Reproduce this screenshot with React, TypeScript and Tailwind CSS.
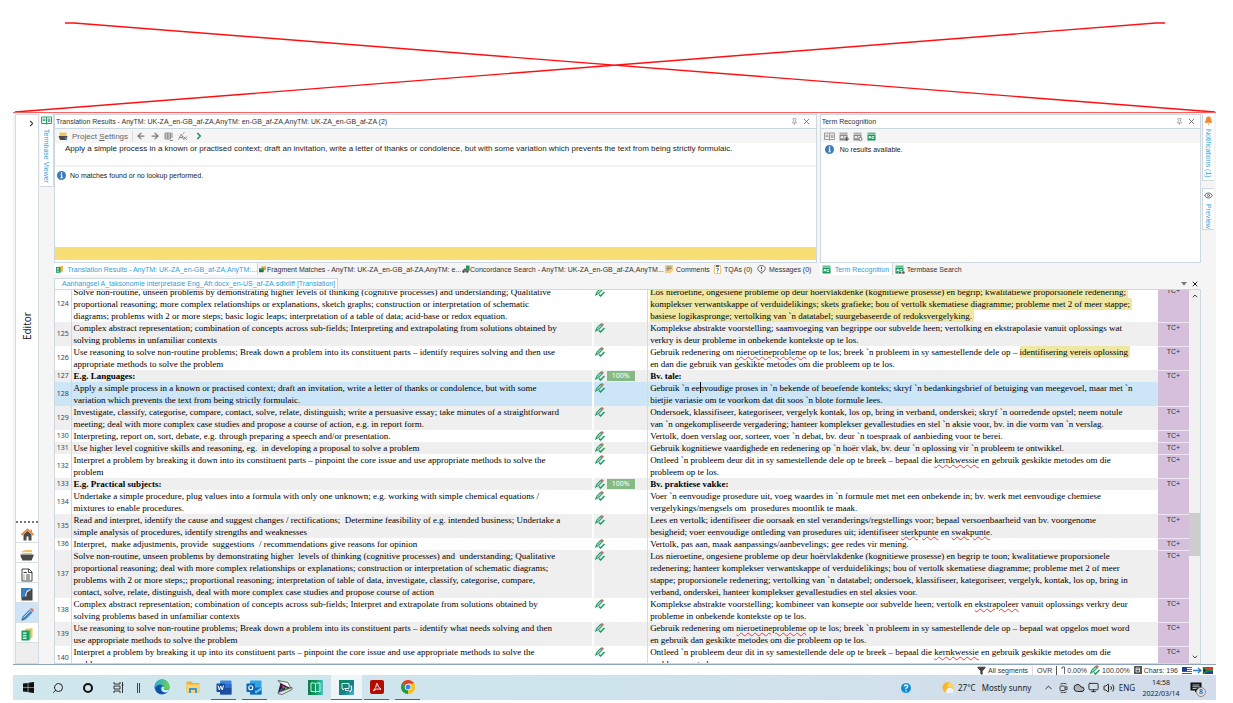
import React from "react";
import {
  Bell, ChevronDown, ChevronUp, ChevronRight, Eye, Filter, Pin, Search, X, Cloud, Volume2, Monitor, ArrowLeft, ArrowRight,
} from "lucide-react";

type Part = string | { t: string; k: "err" | "hl" | "caret" };
type Segment = {
  n: number;
  src: string[];
  tgt: Part[][];
  bold?: boolean;
  match?: string;
  span?: 1 | 2;
  noTag?: boolean;
  selected?: boolean;
};

const err = (t: string): Part => ({ t, k: "err" });
const hl = (t: string): Part => ({ t, k: "hl" });
const caret: Part = { t: "", k: "caret" };

const segments: Segment[] = [
  {
    n: 124,
    src: [
      "Solve non-routine, unseen problems by demonstrating higher levels of thinking (cognitive processes) and understanding; Qualitative",
      "proportional reasoning; more complex relationships or explanations, sketch graphs; construction or interpretation of schematic",
      "diagrams; problems with 2 or more steps; basic logic leaps; interpretation of a table of data; acid-base or redox equation.",
    ],
    tgt: [
      [hl("Los nieroetine, ongesiene probleme op deur hoërvlakdenke (kognitiewe prosesse) en begrip; kwalitatiewe proporsionele redenering;")],
      [hl("komplekser verwantskappe of verduidelikings; skets grafieke; bou of vertolk skematiese diagramme; probleme met 2 of meer stappe;")],
      [hl("basiese logikaspronge; vertolking van `n datatabel; suurgebaseerde of redoksvergelyking.")],
    ],
  },
  {
    n: 125,
    src: [
      "Complex abstract representation; combination of concepts across sub-fields; Interpreting and extrapolating from solutions obtained by",
      "solving problems in unfamiliar contexts",
    ],
    tgt: [
      ["Komplekse abstrakte voorstelling; saamvoeging van begrippe oor subvelde heen; vertolking en ekstrapolasie vanuit oplossings wat"],
      ["verkry is deur probleme in onbekende kontekste op te los."],
    ],
  },
  {
    n: 126,
    src: [
      "Use reasoning to solve non-routine problems; Break down a problem into its constituent parts – identify requires solving and then use",
      "appropriate methods to solve the problem",
    ],
    tgt: [
      ["Gebruik redenering om ", err("nieroetineprobleme"), " op te los; breek `n probleem in sy samestellende dele op – ", hl("identifisering vereis oplossing")],
      ["en dan die gebruik van geskikte metodes om die probleem op te los."],
    ],
  },
  { n: 127, src: ["E.g. Languages:"], tgt: [["Bv. tale:"]], bold: true, match: "100%", span: 2 },
  {
    n: 128,
    src: [
      "Apply a simple process in a known or practised context; draft an invitation, write a letter of thanks or condolence, but with some",
      "variation which prevents the text from being strictly formulaic.",
    ],
    tgt: [
      ["Gebruik `n ee", caret, "nvoudige proses in `n bekende of beoefende konteks; skryf `n bedankingsbrief of betuiging van meegevoel, maar met `n"],
      ["bietjie variasie om te voorkom dat dit soos `n blote formule lees."],
    ],
    noTag: true,
    selected: true,
  },
  {
    n: 129,
    src: [
      "Investigate, classify, categorise, compare, contact, solve, relate, distinguish; write a persuasive essay; take minutes of a straightforward",
      "meeting; deal with more complex case studies and propose a course of action, e.g. in report form.",
    ],
    tgt: [
      ["Ondersoek, klassifiseer, kategoriseer, vergelyk kontak, los op, bring in verband, onderskei; skryf `n oorredende opstel; neem notule"],
      ["van `n ongekompliseerde vergadering; hanteer komplekser gevallestudies en stel `n aksie voor, bv. in die vorm van `n verslag."],
    ],
  },
  {
    n: 130,
    src: ["Interpreting, report on, sort, debate, e.g. through preparing a speech and/or presentation."],
    tgt: [["Vertolk, doen verslag oor, sorteer, voer `n debat, bv. deur `n toespraak of aanbieding voor te berei."]],
  },
  {
    n: 131,
    src: ["Use higher level cognitive skills and reasoning, eg.  in developing a proposal to solve a problem"],
    tgt: [["Gebruik kognitiewe vaardighede en redenering op `n hoër vlak, bv. deur `n oplossing vir `n probleem te ontwikkel."]],
  },
  {
    n: 132,
    src: [
      "Interpret a problem by breaking it down into its constituent parts – pinpoint the core issue and use appropriate methods to solve the",
      "problem",
    ],
    tgt: [
      ["Ontleed `n probleem deur dit in sy samestellende dele op te breek – bepaal die ", err("kernkwessie"), " en gebruik geskikte metodes om die"],
      ["probleem op te los."],
    ],
  },
  { n: 133, src: ["E.g. Practical subjects:"], tgt: [["Bv. praktiese vakke:"]], bold: true, match: "100%", span: 2 },
  {
    n: 134,
    src: [
      "Undertake a simple procedure, plug values into a formula with only one unknown; e.g. working with simple chemical equations /",
      "mixtures to enable procedures.",
    ],
    tgt: [
      ["Voer `n eenvoudige prosedure uit, voeg waardes in `n formule met met een onbekende in; bv. werk met eenvoudige chemiese"],
      ["vergelykings/mengsels om  prosedures moontlik te maak."],
    ],
    noTag: true,
  },
  {
    n: 135,
    src: [
      "Read and interpret, identify the cause and suggest changes / rectifications;  Determine feasibility of e.g. intended business; Undertake a",
      "simple analysis of procedures, identify strengths and weaknesses",
    ],
    tgt: [
      ["Lees en vertolk; identifiseer die oorsaak en stel veranderings/regstellings voor; bepaal versoenbaarheid van bv. voorgenome"],
      ["besigheid; voer eenvoudige ontleding van prosedures uit; identifiseer ", err("sterkpunte"), " en ", err("swakpunte"), "."],
    ],
  },
  {
    n: 136,
    src: ["Interpret,  make adjustments, provide  suggestions  / recommendations give reasons for opinion"],
    tgt: [["Vertolk, pas aan, maak aanpassings/aanbevelings; gee redes vir mening."]],
  },
  {
    n: 137,
    src: [
      "Solve non-routine, unseen problems by demonstrating higher  levels of thinking (cognitive processes) and  understanding; Qualitative",
      "proportional reasoning; deal with more complex relationships or explanations; construction or interpretation of schematic diagrams;",
      "problems with 2 or more steps;; proportional reasoning; interpretation of table of data, investigate, classify, categorise, compare,",
      "contact, solve, relate, distinguish, deal with more complex case studies and propose course of action",
    ],
    tgt: [
      ["Los nieroetine, ongesiene probleme op deur hoërvlakdenke (kognitiewe prosesse) en begrip te toon; kwalitatiewe proporsionele"],
      ["redenering; hanteer komplekser verwantskappe of verduidelikings; bou of vertolk skematiese diagramme; probleme met 2 of meer"],
      ["stappe; proporsionele redenering; vertolking van `n datatabel; ondersoek, klassifiseer, kategoriseer, vergelyk, kontak, los op, bring in"],
      ["verband, onderskei, hanteer komplekser gevallestudies en stel aksies voor."],
    ],
  },
  {
    n: 138,
    src: [
      "Complex abstract representation; combination of concepts across sub-fields; Interpret and extrapolate from solutions obtained by",
      "solving problems based in unfamiliar contexts",
    ],
    tgt: [
      ["Komplekse abstrakte voorstelling; kombineer van konsepte oor subvelde heen; vertolk en ", err("ekstrapoleer"), " vanuit oplossings verkry deur"],
      ["probleme in onbekende kontekste op te los."],
    ],
  },
  {
    n: 139,
    src: [
      "Use reasoning to solve non-routine problems; Break down a problem into its constituent parts – identify what needs solving and then",
      "use appropriate methods to solve the problem",
    ],
    tgt: [
      ["Gebruik redenering om ", err("nieroetineprobleme"), " op te los; breek `n probleem in sy samestellende dele op – bepaal wat opgelos moet word"],
      ["en gebruik dan geskikte metodes om die probleem op te los."],
    ],
  },
  {
    n: 140,
    src: [
      "Interpret a problem by breaking it up into its constituent parts – pinpoint the core issue and use appropriate methods to solve the",
      "problem",
    ],
    tgt: [
      ["Ontleed `n probleem deur dit in sy samestellende dele op te breek – bepaal die ", err("kernkwessie"), " en gebruik geskikte metodes om die"],
      ["probleem op te los."],
    ],
  },
];

/* ---------- icons ---------- */

function EditPen() {
  return (
    <svg width="10" height="10" viewBox="0 0 20 20" fill="none" aria-hidden="true">
      <path d="M1.500 16 L4 10 L11 3 L14 6 L7 13 Z" fill="#d5efe2" stroke="#2f9f70" strokeWidth="2.400" />
      <path d="M11 2 L14 0 L18 3 L15 6.500 Z" fill="#d9695c" />
      <path d="M8 15 L11 18 L19 10" stroke="#159a62" strokeWidth="3" />
    </svg>
  );
}

function Termbase({ color = "#8a8a8a", mark = "" }: { color?: string; mark?: "" | "plus" | "gear" | "find" }) {
  return (
    <svg width="10" height="9" viewBox="0 0 20 18" fill="none" aria-hidden="true">
      <rect x="1" y="1" width="16" height="3" fill={color} opacity="0.65" />
      <rect x="1" y="5" width="16" height="12" fill={color} />
      <path d="M4 13 V9 H8 V13 M4 11 H8 M10 9 H14 L10 13 H14" stroke="#fff" strokeWidth="1.500" />
      {mark === "plus" && <path d="M11 14 H20 M15.500 10 V18" stroke="#555" strokeWidth="2.400" />}
      {mark === "gear" && <circle cx="15" cy="14" r="3" fill="#fff" stroke="#777" strokeWidth="2" />}
      {mark === "find" && (
        <g fill="#555" stroke="#fff">
          <circle cx="10" cy="15" r="3" />
          <circle cx="17" cy="15" r="3" />
        </g>
      )}
    </svg>
  );
}

function BookAB({ color }: { color: string }) {
  return (
    <svg width="11" height="9" viewBox="0 0 22 18" fill="none" stroke={color} strokeWidth="2" aria-hidden="true">
      <path d="M1 2 H21 V15 H1 Z M11 2 V17" />
      <path d="M4 11 V6 H8 V11 M4 9 H8 M14 6 H18 V11 H14 Z M14 8.500 H18" strokeWidth="1.500" />
    </svg>
  );
}

function Info() {
  return (
    <svg width="9" height="9" viewBox="0 0 18 18" aria-hidden="true">
      <circle cx="9" cy="9" r="9" fill="#3b7cb8" />
      <path d="M7 7 H10.500 V13 H12 V14.500 H6.500 V13 H8 V8.500 H7 Z" fill="#fff" />
      <circle cx="9.200" cy="4.200" r="1.600" fill="#fff" />
    </svg>
  );
}

function TmServer() {
  return (
    <svg width="9" height="9" viewBox="0 0 18 18" aria-hidden="true">
      <path d="M8 2 L17 0 V14 L8 16 Z" fill="#e9b949" />
      <path d="M0 3 H11 V17 H0 Z" fill="#1f9a60" />
      <path d="M2 6.500 H7 M2 10 H7 M2 13.500 H7" stroke="#fff" strokeWidth="1.600" />
    </svg>
  );
}

function Fragment() {
  return (
    <svg width="7" height="7" viewBox="0 0 18 16" className="shrink-0" aria-hidden="true">
      <path d="M6 0 H18 V10 H6 Z" fill="#eaa83a" />
      <path d="M0 5 H12 V15 H0 Z" fill="#16774c" />
      <path d="M2 7 H10" stroke="#6cc79c" strokeWidth="1.600" />
    </svg>
  );
}

function Concordance() {
  return (
    <svg width="8" height="9" viewBox="0 0 20 20" className="shrink-0" aria-hidden="true">
      <path d="M10 0 H19 V14 H10 Z" fill="#1f9a60" />
      <path d="M2 11 L7 7 L12 10 L15 15 H2 Z" fill="#555" />
      <circle cx="4" cy="15" r="3.600" fill="#444" stroke="#ddd" />
      <circle cx="13" cy="15" r="3.600" fill="#444" stroke="#ddd" />
    </svg>
  );
}

function Note() {
  return (
    <svg width="8" height="8" viewBox="0 0 16 16" aria-hidden="true">
      <path d="M0 0 H16 V11 L11 16 H0 Z" fill="#f3cf87" />
      <path d="M3 4 H13 M3 7 H13 M3 10 H9" stroke="#7a715f" strokeWidth="1.600" />
    </svg>
  );
}

function Clipboard() {
  return (
    <svg width="7" height="9" viewBox="0 0 14 18" fill="none" aria-hidden="true">
      <rect width="14" height="18" rx="1" fill="#efc578" />
      <rect x="2" y="3" width="10" height="13" fill="#fff" />
      <rect x="4" y="0" width="6" height="4" fill="#666" />
      <path d="M5 7 H9 V10 H7 V12 M7 13 V15" stroke="#4a83bd" strokeWidth="1.800" />
    </svg>
  );
}

function Message() {
  return (
    <svg width="9" height="9" viewBox="0 0 18 18" fill="none" stroke="#444" strokeWidth="1.500" aria-hidden="true">
      <path d="M9 17 L7 13.500 A7.500 6.500 0 1 1 11 13.500 Z" />
      <path d="M9 3.500 V8.500 M9 10 V11.500" strokeWidth="2" />
    </svg>
  );
}

function Tray() {
  return (
    <svg width="10" height="9" viewBox="0 0 20 18" aria-hidden="true">
      <path d="M3 1 H17 V8 H3 Z" fill="#f1c45c" />
      <path d="M1 8 H19 L16 16 H4 Z" fill="#4a4a4a" />
      <path d="M12 11 L17 17 L19 11 Z" fill="#3b8ed0" />
    </svg>
  );
}

const NavHome = () => (
  <svg width="13" height="13" viewBox="0 0 26 26" aria-hidden="true">
    <path d="M5 13 L13 6 L21 13 V25 H15 V17 H11 V25 H5 Z" fill="#4a4a4a" />
    <path d="M1 14 L13 3 L25 14" fill="none" stroke="#ed8a3c" strokeWidth="4" />
    <path d="M19 3 H22 V9 H19 Z" fill="#ed8a3c" />
  </svg>
);
const NavProjects = () => (
  <svg width="14" height="12" viewBox="0 0 28 24" aria-hidden="true">
    <path d="M4 10 V4 H9 V2 H24 V10 Z" fill="#f1c45c" />
    <path d="M4 7 H24" stroke="#fff" strokeWidth="1.500" />
    <path d="M1 11 H27 V14 L23 23 H5 L1 14 Z" fill="#4a4a4a" />
  </svg>
);
const NavFiles = () => (
  <svg width="12" height="14" viewBox="0 0 24 28" fill="none" stroke="#444" strokeWidth="2" aria-hidden="true">
    <path d="M2 2 H16 L22 8 V26 H2 Z M15 2 V9 H22" />
    <path d="M5 9 H12 M5 14 H7 M10 14 H18 M5 18 H7 M10 18 H18 M5 22 H7 M10 22 H18" />
  </svg>
);
const NavReports = () => (
  <svg width="12" height="13" viewBox="0 0 24 26" aria-hidden="true">
    <path d="M1 1 H23 V25 H1 Z" fill="#474747" />
    <path d="M0 0 H20 L17 5 L8 6 L8 17 L0 20 Z" fill="#3a7fc0" />
    <path d="M19 3 L11 8 L9 17" stroke="#dfeaf5" strokeWidth="2.400" fill="none" />
  </svg>
);
const NavEditor = () => (
  <svg width="13" height="13" viewBox="0 0 26 26" aria-hidden="true">
    <path d="M1 25 L3 17 L17 3 L23 9 L9 23 Z" fill="#3f86c6" />
    <path d="M5 19 L18 6" stroke="#cfe3f4" strokeWidth="2" />
    <path d="M18 2 L20 0 Q25 0 25.500 6 L24 8 Z" fill="#e07163" />
    <path d="M1 25 L2 20 L6 24 Z" fill="#555" />
  </svg>
);
const NavMemories = () => (
  <svg width="12" height="13" viewBox="0 0 24 26" aria-hidden="true">
    <path d="M8 2 L23 0 V20 L8 22 Z" fill="#f0c75d" />
    <path d="M1 5 H16 V25 H1 Z" fill="#1d9c5f" />
    <path d="M4 10 H11 M4 15 H11 M4 20 H11" stroke="#fff" strokeWidth="2.500" />
    <path d="M16 5 L19 4 V23 L16 25 Z" fill="#56b98a" />
  </svg>
);

/* taskbar icons */
const WindowsLogo = () => (
  <svg width="11" height="11" viewBox="0 0 22 22" aria-hidden="true">
    <path d="M0 3 L9.500 1.800 V10.400 H0 Z M10.700 1.600 L22 0 V10.400 H10.700 Z M0 11.600 H9.500 V20.200 L0 19 Z M10.700 11.600 H22 V22 L10.700 20.400 Z" fill="#111" />
  </svg>
);
const TaskView = () => (
  <svg width="11" height="11" viewBox="0 0 22 22" fill="none" stroke="#222" strokeWidth="1.800" aria-hidden="true">
    <path d="M2 0 V4 H14 V0 M2 8 H14 V14 H2 Z M2 22 V18 H14 V22 M19 0 V22 M17 6 H21" />
  </svg>
);
const Edge = () => (
  <svg width="16" height="16" viewBox="0 0 32 32" aria-hidden="true">
    <defs>
      <linearGradient id="edgeTop" x1="0" y1="0" x2="1" y2="0.300">
        <stop offset="0" stopColor="#2aa5dd" />
        <stop offset="1" stopColor="#62d35b" />
      </linearGradient>
    </defs>
    <circle cx="16" cy="16" r="15" fill="#1766bd" />
    <path d="M1 16 A15 15 0 0 1 31 15 Q31 21 24 21 H20 Q18 20 20 17 Q20 12 14 11 Q5 11 1 18 Z" fill="url(#edgeTop)" />
    <path d="M12 17 Q12 28 24 26 Q18 32 12 29 Q3 26 4 19 Q7 12 14 12 Q12 14 12 17" fill="#0f4fa5" />
    <path d="M20 17 Q18 21 23 22 Q28 22 30 19 L28 25 Q20 29 16 24 Q13 20 16 15 Q20 14 20 17" fill="#d6eaf2" />
  </svg>
);
const Explorer = () => (
  <svg width="14" height="12" viewBox="0 0 28 24" aria-hidden="true">
    <path d="M1 1 H11 L14 4 H27 V23 H1 Z" fill="#e9b13d" />
    <path d="M1 7 H27 V23 H1 Z" fill="#fbd56c" />
    <path d="M6 24 V14 H22 V24 H18 V18 H10 V24 Z" fill="#3e97dc" />
  </svg>
);
const OfficeIcon = ({ letter }: { letter: "W" | "O" }) => (
  <svg width="16" height="15" viewBox="0 0 32 30" aria-hidden="true">
    <rect x="8" y="1" width="23" height="28" rx="2" fill={letter === "W" ? "#3a86dc" : "#31a3e6"} />
    <rect x="8" y="15" width="23" height="14" fill={letter === "W" ? "#1b4fa3" : "#1568b5"} />
    <path d={letter === "W" ? "M8 8 H31 V15 H8 Z" : "M8 14 L20 22 L31 14 V20 L20 27 Z"} fill={letter === "W" ? "#2b6fd0" : "#5ec4f2"} />
    <rect x="1" y="7" width="17" height="17" rx="1.500" fill={letter === "W" ? "#174a9c" : "#0f63b5"} />
    {letter === "W" ? (
      <path d="M4 11 L6.500 20 L9.500 12 L12.500 20 L15 11" fill="none" stroke="#fff" strokeWidth="2" />
    ) : (
      <circle cx="9.500" cy="15.500" r="4" fill="none" stroke="#fff" strokeWidth="2.200" />
    )}
  </svg>
);
const Scanner = () => (
  <svg width="16" height="15" viewBox="0 0 32 30" aria-hidden="true">
    <path d="M2 1 L22 5 L28 17 L12 12 Z" fill="#f2f2f2" stroke="#444" strokeWidth="1.500" />
    <path d="M7 6 L26 16 L2 25 Z" fill="#222" />
    <path d="M8 17 L14 18 L5 23 Z" fill="#3b57d8" />
    <path d="M9 10 L17 14 L12 18 Z" fill="#d33bb0" />
    <path d="M17 14 L22 16 L15 20 Z" fill="#49bd4e" />
    <path d="M2 25 L30 15 V19 L10 29 L2 27 Z" fill="#e6e6e6" stroke="#444" strokeWidth="1.500" />
  </svg>
);
const Studio = () => (
  <svg width="15" height="15" viewBox="0 0 30 30" aria-hidden="true">
    <defs>
      <linearGradient id="studioBg" x1="0" y1="0" x2="1" y2="0">
        <stop offset="0" stopColor="#0b7a4c" />
        <stop offset="0.600" stopColor="#12a066" />
        <stop offset="1" stopColor="#4cc3d0" />
      </linearGradient>
    </defs>
    <rect width="30" height="30" fill="url(#studioBg)" />
    <path d="M6 6 H13 L15 8 L17 6 H24 V23 H17 L15 25 L13 23 H6 Z M15 8 V25" fill="none" stroke="#eafaf4" strokeWidth="1.800" />
  </svg>
);
const StudioChat = () => (
  <svg width="15" height="15" viewBox="0 0 30 30" aria-hidden="true">
    <defs>
      <linearGradient id="chatBg" x1="0" y1="0" x2="1" y2="1">
        <stop offset="0" stopColor="#0b8a55" />
        <stop offset="0.600" stopColor="#1a7f8d" />
        <stop offset="1" stopColor="#49b8e0" />
      </linearGradient>
    </defs>
    <rect width="30" height="30" fill="url(#chatBg)" />
    <path d="M6 7 H20 V17 H11 L8 20 V17 H6 Z M22 12 H25 V21 H23 V24 L19 21 H13 V18" fill="none" stroke="#eafaf4" strokeWidth="1.800" />
  </svg>
);
const Acrobat = () => (
  <svg width="14" height="14" viewBox="0 0 28 28" aria-hidden="true">
    <rect width="28" height="28" rx="4" fill="#b30b00" />
    <path d="M7 21 Q13 15 13 8 Q14 5 15 8 Q15 15 22 18 Q22 20 18 18 Q12 17 8 21 Q6 22 7 21" fill="none" stroke="#fff" strokeWidth="1.800" />
  </svg>
);
const Chrome = () => (
  <svg width="14" height="14" viewBox="0 0 28 28" aria-hidden="true">
    <circle cx="14" cy="14" r="14" fill="#fbc116" />
    <path d="M14 14 L1.900 7 A14 14 0 0 1 26.100 7 Z" fill="#e33b2e" />
    <path d="M14 14 L1.900 7 A14 14 0 0 0 14 28 Z" fill="#269a48" />
    <path d="M14 7 H26.100 A14 14 0 0 1 14 28 L20 17 Z" fill="#fbc116" />
    <circle cx="14" cy="14" r="6.500" fill="#fff" />
    <circle cx="14" cy="14" r="5" fill="#3f80e8" />
  </svg>
);
const HelpBadge = () => (
  <svg width="12" height="12" viewBox="0 0 24 24" aria-hidden="true">
    <circle cx="12" cy="12" r="11" fill="#1189d3" stroke="#fff" strokeWidth="1.500" />
    <path d="M8.500 9 Q9 6 12 6 Q15.500 6 15.500 9 Q15.500 11 12 12.500 V14.500 M12 16.500 V19" fill="none" stroke="#fff" strokeWidth="2.600" />
  </svg>
);
const Weather = () => (
  <svg width="13" height="13" viewBox="0 0 26 26" aria-hidden="true">
    <circle cx="14" cy="13" r="11" fill="#f9b52c" />
    <path d="M17 3 Q25 5 25 14 L13 12 Q12 6 17 3" fill="#fdd76a" />
    <path d="M11 24 Q8 20 12 17 Q14 12 19 14 Q25 14 25 19 Q25 24 20 24 Z" fill="#eef3fa" />
  </svg>
);
const MeetNow = () => (
  <svg width="9" height="10" viewBox="0 0 18 20" fill="none" stroke="#222" strokeWidth="1.600" aria-hidden="true">
    <rect x="2" y="6" width="10" height="9" rx="2" />
    <path d="M12 9 L16 7 V14 L12 12 M3 2 Q9 -1 15 2 M3 18 Q9 21 15 18" />
  </svg>
);
const NoteCenter = () => (
  <svg width="12" height="11" viewBox="0 0 24 22" aria-hidden="true">
    <path d="M1 1 H23 V17 H14 L10 21 V17 H1 Z" fill="#111" />
    <path d="M5 6 H19 M5 9.500 H19 M5 13 H13" stroke="#e5edf6" strokeWidth="1.600" />
  </svg>
);

/* ---------- pieces ---------- */

function Target({ parts }: { parts: Part[] }) {
  return (
    <div>
      {parts.map((p, i) => {
        if (typeof p === "string") return <span key={i}>{p}</span>;
        if (p.k === "caret") return <span key={i} className="-mr-px inline-block h-[11px] w-px bg-black align-top" />;
        if (p.k === "hl") return <span key={i} className="inline-block h-3 bg-[#efe8a4] pr-0.5 align-top">{p.t}</span>;
        return (
          <span key={i} className="underline decoration-[#f03c3c] decoration-wavy decoration-1 underline-offset-1">
            {p.t}
          </span>
        );
      })}
    </div>
  );
}

function PanelHeader({ title }: { title: string }) {
  return (
    <header className="flex h-3.5 shrink-0 items-center border-b border-[#cdd8df] bg-white pr-1 pl-px">
      <h2 className="min-w-0 flex-1 truncate text-[7px] text-[#333]">{title}</h2>
      <button type="button" aria-label="Pin" className="mr-0.5 flex w-2.5 justify-center text-[#777]">
        <Pin size={7} />
      </button>
      <button type="button" aria-label="Close" className="flex w-2.5 justify-center text-[#555]">
        <X size={9} />
      </button>
    </header>
  );
}

function Tab({ icon, label, active = false, className = "" }: { icon: React.ReactNode; label: string; active?: boolean; className?: string }) {
  return (
    <button
      type="button"
      className={
        (active ? "border-r border-[#cdd8df] bg-white text-[#2b9fd9] " : "text-[#333] ") +
        "flex h-3 shrink-0 items-center text-[7px] whitespace-nowrap " +
        className
      }
    >
      {icon}
      <span>{label}</span>
    </button>
  );
}

const navItems = [
  { label: "Home", icon: <NavHome /> },
  { label: "Projects", icon: <NavProjects /> },
  { label: "Files", icon: <NavFiles /> },
  { label: "Reports", icon: <NavReports /> },
  { label: "Editor view", icon: <NavEditor />, active: true },
  { label: "Translation Memories", icon: <NavMemories /> },
];

const apps = [
  { label: "Edge", icon: <Edge /> },
  { label: "File Explorer", icon: <Explorer /> },
  { label: "Word", icon: <OfficeIcon letter="W" />, open: true },
  { label: "Outlook", icon: <OfficeIcon letter="O" />, open: true },
  { label: "Scanner", icon: <Scanner /> },
  { label: "MultiTerm", icon: <Studio /> },
  { label: "Studio", icon: <StudioChat />, open: true, active: true },
  { label: "Acrobat", icon: <Acrobat />, open: true },
  { label: "Chrome", icon: <Chrome />, open: true },
];

function Sidebar() {
  return (
    <nav className="flex w-6 shrink-0 flex-col border border-[#d3dce2] bg-white">
      <button type="button" aria-label="Expand" className="flex h-4 items-center justify-end pr-0.5 text-[#444]">
        <ChevronRight size={9} strokeWidth={3} />
      </button>
      <div className="flex flex-1 items-center justify-center">
        <span className="rotate-180 font-['Noto_Sans'] text-[10px] leading-4 text-[#222] [writing-mode:vertical-rl]">Editor</span>
      </div>
      <div className="border-t-2 border-dotted border-[#777]" />
      {navItems.map((it) => (
        <button
          key={it.label}
          type="button"
          aria-label={it.label}
          className={(it.active ? "bg-[#cfe5f7] " : "") + "flex h-5 items-center justify-center border-b border-[#d9e0e5] pt-1"}
        >
          {it.icon}
        </button>
      ))}
      <div className="h-5 bg-[#eeeeee]" />
    </nav>
  );
}

function ResultsPanel() {
  return (
    <section className="flex min-w-0 flex-2 flex-col">
      <div className="flex h-[149px] flex-col border border-[#cdd8df] bg-white">
        <PanelHeader title="Translation Results - AnyTM: UK-ZA_en-GB_af-ZA,AnyTM: en-GB_af-ZA,AnyTM: UK-ZA_en-GB_af-ZA (2)" />
        <div className="flex h-3.5 shrink-0 items-center bg-[#f5f5f5] pl-[3px] text-[#777]">
          <button type="button" className="flex items-center gap-1 text-[8px] text-[#666]">
            <Tray />
            <span>Project <u>S</u>ettings</span>
          </button>
          <span className="mr-[3px] ml-1 h-2.5 w-px bg-[#ddd]" />
          <button type="button" aria-label="Previous" className="w-3.5"><ArrowLeft size={10} strokeWidth={3} /></button>
          <button type="button" aria-label="Next" className="w-3.5"><ArrowRight size={10} strokeWidth={3} /></button>
          <button type="button" aria-label="Apply translation" className="w-3.5">
            <svg width="9" height="9" viewBox="0 0 18 18" fill="none" stroke="#8a8a8a" strokeWidth="2" aria-hidden="true">
              <path d="M2 2 H13 V14 H2 Z M2 6 H13 M2 10 H13 M7.500 2 V14 M16 1 V12 M12 17 H18" />
            </svg>
          </button>
          <button type="button" aria-label="Formatting" className="w-4">
            <svg width="10" height="9" viewBox="0 0 20 18" fill="none" stroke="#8a8a8a" strokeWidth="2" aria-hidden="true">
              <path d="M1 15 L7 4 L11 15 M3 11 H10 M11 9 L18 16 M18 9 L11 16 M10 3 L13 1" />
            </svg>
          </button>
          <button type="button" aria-label="Run" className="text-[#18935a]"><ChevronRight size={10} strokeWidth={4} /></button>
        </div>
        <p className="h-[22px] shrink-0 truncate pl-2.5 text-[8px] leading-3 text-[#222]">
          Apply a simple process in a known or practised context; draft an invitation, write a letter of thanks or condolence, but with some variation which prevents the text from being strictly formulaic.
        </p>
        <div className="h-0.5 shrink-0 bg-[#f2f2f2]" />
        <div className="flex flex-1 items-start gap-1 pt-1 pl-0.5 text-[7px] leading-[9px] text-[#222]">
          <Info />
          <span>No matches found or no lookup performed.</span>
        </div>
        <div className="mb-0.5 h-[13px] shrink-0 bg-[#f8df75]" />
      </div>
      <div className="flex">
        <Tab active icon={<TmServer />} label="Translation Results - AnyTM: UK-ZA_en-GB_af-ZA,AnyTM:..." className="w-[204px] gap-1 pl-0.5" />
        <Tab icon={<Fragment />} label="Fragment Matches - AnyTM: UK-ZA_en-GB_af-ZA,AnyTM: e..." className="w-[204px] gap-px pl-px" />
        <Tab icon={<Concordance />} label="Concordance Search - AnyTM: UK-ZA_en-GB_af-ZA,AnyTM..." className="w-[203px]" />
        <Tab icon={<Note />} label="Comments" className="w-[49px] gap-[3px]" />
        <Tab icon={<Clipboard />} label="TQAs (0)" className="w-[43px] gap-[3px]" />
        <Tab icon={<Message />} label="Messages (0)" className="gap-[3px]" />
      </div>
    </section>
  );
}

function TermPanel() {
  return (
    <section className="flex min-w-0 flex-1 flex-col">
      <div className="flex h-[149px] flex-col border border-[#cdd8df] bg-white">
        <PanelHeader title="Term Recognition" />
        <div className="flex h-3.5 shrink-0 items-center gap-1 bg-[#f5f5f5] pl-[3px]">
          <button type="button" aria-label="View term"><BookAB color="#999" /></button>
          <button type="button" aria-label="Add term"><Termbase mark="plus" /></button>
          <button type="button" aria-label="Term settings"><Termbase mark="gear" /></button>
          <button type="button" aria-label="Termbase"><Termbase color="#159a5c" /></button>
        </div>
        <div className="flex flex-1 items-start gap-1.5 pt-0.5 pl-1 text-[7px] leading-[9px] text-[#222]">
          <Info />
          <span>No results available.</span>
        </div>
      </div>
      <div className="flex">
        <Tab active icon={<Termbase color="#159a5c" />} label="Term Recognition" className="w-[73px] gap-[3px] pl-0.5" />
        <Tab icon={<Termbase color="#159a5c" mark="find" />} label="Termbase Search" className="gap-0.5 pl-0.5" />
      </div>
    </section>
  );
}

function EditorGrid() {
  return (
    <div className="flex h-[375px] border border-[#cdd8df] bg-white">
      <div className="min-w-0 flex-1 overflow-hidden">
        <table className="-mt-1 w-full table-fixed border-collapse">
          <colgroup>
            <col className="w-4" />
            <col className="w-[46%]" />
            <col className="w-[55px]" />
            <col />
            <col className="w-[31px]" />
          </colgroup>
          <tbody>
            {segments.map((s) => {
              const bg = s.selected ? "bg-[#cce5f7]" : s.n % 2 ? "bg-[#efefef]" : "bg-white";
              const face = s.bold ? "font-bold" : "";
              return (
                <tr key={s.n} className={bg}>
                  <td className="border-r border-[#d6d6d6] p-0 text-center align-middle font-['Noto_Sans'] text-[7px] leading-3 text-[#444]">
                    {s.n}
                  </td>
                  <td className="border-r-2 border-white p-0 pl-0.5 align-top font-['Liberation_Serif'] text-[9px] leading-3 whitespace-pre text-black">
                    {s.src.map((l) => (
                      <div key={l} className={face}>{l}</div>
                    ))}
                  </td>
                  <td className="border-r border-l border-[#dadada] p-0 align-top">
                    <div className="flex h-3 items-center gap-0.5 pl-px">
                      <EditPen />
                      {s.match && (
                        <span className="w-7 bg-[#85ba85] text-center font-['Noto_Sans'] text-[7px] leading-[10px] text-white">{s.match}</span>
                      )}
                    </div>
                  </td>
                  <td className="p-0 pl-0.5 align-top font-['Liberation_Serif'] text-[9px] leading-3 whitespace-pre text-black">
                    <div className={face}>
                      {s.tgt.map((parts, i) => (
                        <Target key={i} parts={parts} />
                      ))}
                    </div>
                  </td>
                  {!s.noTag && (
                    <td rowSpan={s.span ?? 1} className="border-b border-[#eee3f0] bg-[#d6bfdb] p-0 text-center align-top text-[7px] leading-[10px] text-[#333]">
                      TC+
                    </td>
                  )}
                </tr>
              );
            })}
          </tbody>
        </table>
      </div>
      <div className="flex w-[11px] shrink-0 flex-col bg-[#f1f1f1] text-[#444]">
        <button type="button" aria-label="Scroll up" className="flex h-3 items-center justify-center"><ChevronUp size={8} strokeWidth={3} /></button>
        <div className="flex flex-1 flex-col">
          <div className="grow-212" />
          <div className="h-[43px] bg-[#cdcdcd]" />
          <div className="grow-96" />
        </div>
        <button type="button" aria-label="Scroll down" className="flex h-3 items-center justify-center"><ChevronDown size={8} strokeWidth={3} /></button>
      </div>
    </div>
  );
}

function StatusBar() {
  return (
    <footer className="mr-[17px] ml-[13px] flex h-[11px] items-center justify-end border-t border-[#8fa6b8] bg-white pr-[3px] text-[7px] leading-[9px] text-[#333]">
      <div className="flex items-center gap-0.5 pr-1"><Filter size={9} fill="#444" /> All segments</div>
      <div className="border-l border-[#ddd] px-1">OVR</div>
      <div className="flex items-center border-l border-[#555] pl-1">
        <svg width="6" height="9" viewBox="0 0 12 18" fill="none" stroke="#444" strokeWidth="1.600" aria-hidden="true"><path d="M2 2 H7 V16 M2 2 V6" /></svg>
        0.00%
      </div>
      <div className="flex items-center gap-0.5 pr-1 pl-[3px]"><EditPen /> 100.00%</div>
      <div className="flex items-center gap-0.5 pr-1">
        <svg width="8" height="8" viewBox="0 0 16 16" aria-hidden="true"><rect width="16" height="16" rx="1" fill="#555" /><path d="M4 4 H11 V12 H4 Z M4 7 H11" fill="none" stroke="#eee" strokeWidth="1.500" /></svg>
        Chars: 196
      </div>
      <svg width="31" height="7" viewBox="0 0 62 14" aria-hidden="true">
        <rect width="20" height="14" fill="#fff" />
        <path d="M0 1 H20 M0 5 H20 M0 9 H20 M0 13 H20" stroke="#d8232a" strokeWidth="2" />
        <rect width="10" height="8" fill="#22408f" />
        <path d="M22 7 H36 M32 2 L38 7 L32 12" fill="none" stroke="#2f7fc6" strokeWidth="2.600" />
        <rect x="42" width="20" height="7" fill="#d8392c" />
        <rect x="42" y="7" width="20" height="7" fill="#22408f" />
        <path d="M42 0 L52 7 L42 14 Z" fill="#222" stroke="#e7b53b" strokeWidth="1" />
        <path d="M42 0 L50 7 H62 M42 14 L50 7" fill="none" stroke="#1c8a4c" strokeWidth="3" />
      </svg>
    </footer>
  );
}

function Taskbar() {
  return (
    <div className="mr-[17px] ml-[13px] flex h-[25px] items-stretch bg-linear-to-r from-[#d0e7ed] via-[#cfe3ec] to-[#d3dcea] font-['Noto_Sans'] text-[#222]">
      <button type="button" aria-label="Start" className="flex w-[30px] items-center justify-center"><WindowsLogo /></button>
      <button type="button" aria-label="Search" className="flex w-[30px] items-center justify-center"><Search size={12} className="-scale-x-100" /></button>
      <button type="button" aria-label="Cortana" className="flex w-[30px] items-center justify-center">
        <span className="size-2.5 rounded-full border-2 border-[#111]" />
      </button>
      <button type="button" aria-label="Task view" className="flex w-[30px] items-center justify-center"><TaskView /></button>
      <div className="flex w-3.5 items-center pl-1"><span className="h-2.5 w-[3px] border-x border-[#444]" /></div>
      <div className="grid w-[276px] grid-cols-9">
        {apps.map((a) => (
          <button
            key={a.label}
            type="button"
            aria-label={a.label}
            className={(a.active ? "bg-[#edf5f9] " : "") + "flex flex-col items-center"}
          >
            <span className="flex flex-1 items-center justify-center">{a.icon}</span>
            <span className={(a.open ? "bg-[#1673c7] " : "") + (a.active ? "w-full " : "w-[25px] ") + "h-px"} />
          </button>
        ))}
      </div>
      <div className="flex-1" />
      <button type="button" aria-label="Help" className="mr-5 flex w-[30px] items-center justify-center"><HelpBadge /></button>
      <button type="button" className="flex w-[100px] items-center gap-1 text-[8px] whitespace-nowrap">
        <Weather />
        <span>27°C</span>
        <span className="pl-0.5">Mostly sunny</span>
      </button>
      <button type="button" aria-label="Hidden icons" className="flex w-[15px] items-center justify-center"><ChevronUp size={11} /></button>
      <button type="button" aria-label="Meet now" className="flex w-[15px] items-center justify-center"><MeetNow /></button>
      <button type="button" aria-label="OneDrive" className="flex w-[15px] items-center justify-center"><Cloud size={12} fill="#aeb3b8" /></button>
      <button type="button" aria-label="Network" className="flex w-[15px] items-center justify-center"><Monitor size={11} /></button>
      <button type="button" aria-label="Volume" className="flex w-[15px] items-center justify-center"><Volume2 size={12} /></button>
      <button type="button" className="flex w-[22px] items-center justify-center text-[8px]">ENG</button>
      <button type="button" className="flex w-[46px] flex-col items-center justify-center text-[7px] leading-[11px]">
        <span>14:58</span>
        <span>2022/03/14</span>
      </button>
      <button type="button" aria-label="Notifications" className="relative mr-2 flex w-6 items-center justify-center">
        <NoteCenter />
        <span className="absolute top-3 left-3 size-2.5 rounded-full border border-[#888] bg-[#dfe4ea] text-center text-[7px] leading-2">8</span>
      </button>
    </div>
  );
}

export default function App() {
  return (
    <div className="flex w-full flex-col bg-white font-['Liberation_Sans',sans-serif] text-[7px] leading-[9px]">
      <svg className="h-[113px] w-full" viewBox="0 0 1233 113" preserveAspectRatio="none" fill="none" stroke="#ff1010" aria-hidden="true">
        <path d="M65 23 L74 23 L1215 112 M1165 23 L1156 23 L15 112" strokeWidth="1.400" />
        <path d="M13 112.500 H1216" stroke="#ff6060" />
      </svg>

      <div className="mr-[17px] ml-[13px] flex bg-[#f5f5f5] pt-px pl-0.5">
        <Sidebar />
        <div className="flex w-[15px] shrink-0 flex-col pl-px">
          <button type="button" className="flex h-[73px] w-3.5 flex-col items-center gap-1 border-r border-b border-[#cdd8df] bg-white pt-0.5 text-[#2b9fd9]">
            <BookAB color="#2f9f70" />
            <span className="text-[7px] leading-[9px] whitespace-nowrap [writing-mode:vertical-rl]">Termbase Viewer</span>
          </button>
        </div>

        <main className="flex min-w-0 flex-1 flex-col">
          <div className="flex gap-[3px]">
            <ResultsPanel />
            <TermPanel />
          </div>
          <div className="mt-[3px] flex h-[11px] items-center justify-between">
            <button type="button" className="h-full w-[284px] border border-b-0 border-[#cdd8df] bg-white pl-[7px] text-left text-[7px] leading-[10px] whitespace-nowrap text-[#2b9fd9]">
              Aanhangsel A_taksonomie interpretasie Eng_Afr.docx_en-US_af-ZA.sdlxliff [Translation]
            </button>
            <div className="flex items-center">
              <button type="button" aria-label="Documents" className="w-2.5 text-[#777]">
                <svg width="6" height="4" viewBox="0 0 12 8" aria-hidden="true"><path d="M0 0 H12 L6 7 Z" fill="currentColor" /></svg>
              </button>
              <button type="button" aria-label="Close document" className="w-2.5 text-[#222]"><X size={8} strokeWidth={3} /></button>
            </div>
          </div>
          <EditorGrid />
        </main>

        <aside className="flex w-[15px] shrink-0 flex-col gap-[7px]">
          <button type="button" className="ml-px flex h-[67px] w-3 flex-col items-center gap-1 border-b border-l border-[#cdd8df] bg-white pt-0.5 text-[#2b9fd9]">
            <Bell size={9} className="fill-[#ee8a35] text-[#ee8a35]" />
            <span className="text-[7px] leading-[9px] whitespace-nowrap [writing-mode:vertical-rl]">Notifications (1)</span>
          </button>
          <button type="button" className="ml-px flex h-[42px] w-3 flex-col items-center gap-1 border-y border-l border-[#cdd8df] bg-white pt-0.5 text-[#2b9fd9]">
            <Eye size={9} className="text-[#444]" />
            <span className="text-[7px] leading-[9px] whitespace-nowrap [writing-mode:vertical-rl]">Preview</span>
          </button>
        </aside>
      </div>

      <StatusBar />
      <Taskbar />
    </div>
  );
}
